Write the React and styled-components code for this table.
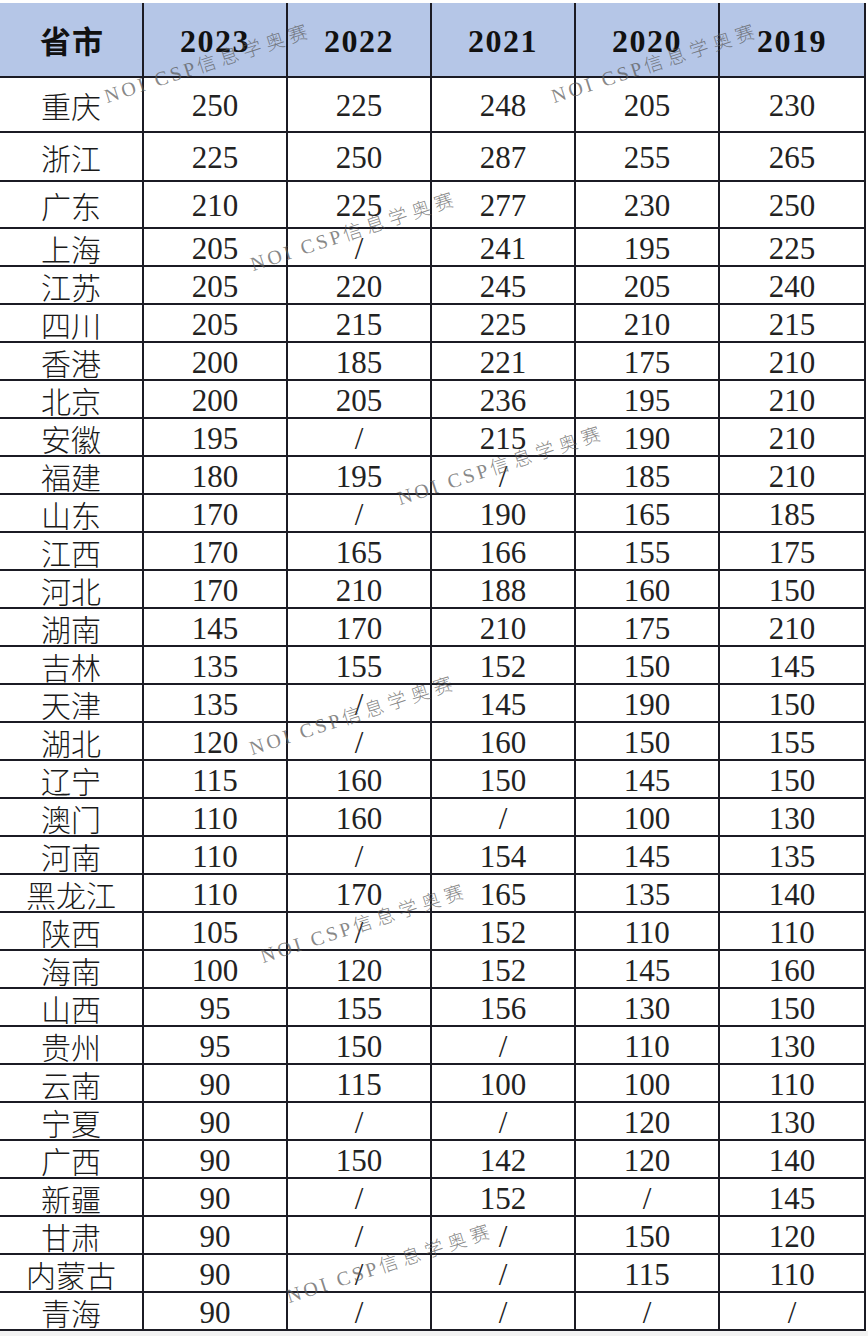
import React from "react";
import styled, { createGlobalStyle } from "styled-components";

const Global = createGlobalStyle`
  html, body { margin: 0; padding: 0; background: #ffffff; }
  body { font-family: "Liberation Serif", "Noto Sans CJK SC", serif; }
`;

const years = ["2023", "2022", "2021", "2020", "2019"];

const rows = [
  ["重庆", "250", "225", "248", "205", "230"],
  ["浙江", "225", "250", "287", "255", "265"],
  ["广东", "210", "225", "277", "230", "250"],
  ["上海", "205", "/", "241", "195", "225"],
  ["江苏", "205", "220", "245", "205", "240"],
  ["四川", "205", "215", "225", "210", "215"],
  ["香港", "200", "185", "221", "175", "210"],
  ["北京", "200", "205", "236", "195", "210"],
  ["安徽", "195", "/", "215", "190", "210"],
  ["福建", "180", "195", "/", "185", "210"],
  ["山东", "170", "/", "190", "165", "185"],
  ["江西", "170", "165", "166", "155", "175"],
  ["河北", "170", "210", "188", "160", "150"],
  ["湖南", "145", "170", "210", "175", "210"],
  ["吉林", "135", "155", "152", "150", "145"],
  ["天津", "135", "/", "145", "190", "150"],
  ["湖北", "120", "/", "160", "150", "155"],
  ["辽宁", "115", "160", "150", "145", "150"],
  ["澳门", "110", "160", "/", "100", "130"],
  ["河南", "110", "/", "154", "145", "135"],
  ["黑龙江", "110", "170", "165", "135", "140"],
  ["陕西", "105", "/", "152", "110", "110"],
  ["海南", "100", "120", "152", "145", "160"],
  ["山西", "95", "155", "156", "130", "150"],
  ["贵州", "95", "150", "/", "110", "130"],
  ["云南", "90", "115", "100", "100", "110"],
  ["宁夏", "90", "/", "/", "120", "130"],
  ["广西", "90", "150", "142", "120", "140"],
  ["新疆", "90", "/", "152", "/", "145"],
  ["甘肃", "90", "/", "/", "150", "120"],
  ["内蒙古", "90", "/", "/", "115", "110"],
  ["青海", "90", "/", "/", "/", "/"],
];

const rowHeights = [55, 49, 47];

const marks = [
  { x: 108, y: 102 },
  { x: 555, y: 102 },
  { x: 254, y: 270 },
  { x: 401, y: 504 },
  { x: 253, y: 754 },
  { x: 264, y: 962 },
  { x: 290, y: 1302 },
];

const Page = styled.div`
  padding-top: 3px;
  padding-bottom: 5px;
  background: linear-gradient(#ffffff 0, #ffffff 1331px, #f2f2f2 1331px);
`;

const Sheet = styled.div`
  position: relative;
  width: 866px;
`;

const Grid = styled.div`
  display: grid;
  grid-template-columns: 144px 144px 144px 144px 144px 146px;
  width: 866px;
`;

const Cell = styled.div`
  box-sizing: border-box;
  height: ${(p) => p.$h}px;
  border-right: 2px solid #1b1b24;
  border-bottom: 2px solid #1b1b24;
  display: flex;
  align-items: center;
  justify-content: center;
  background: ${(p) => (p.$head ? "#b5c6e7" : "#ffffff")};
  color: #141414;
  white-space: nowrap;
`;

const HeadName = styled.span`
  font-family: "Noto Sans CJK SC", sans-serif;
  font-weight: 700;
  font-size: 31px;
  line-height: 1;
  letter-spacing: 1px;
  color: #111;
  padding-left: 2px;
`;

const HeadYear = styled.span`
  font-family: "Liberation Serif", serif;
  font-weight: 700;
  font-size: 32px;
  line-height: 1;
  letter-spacing: 1.5px;
  color: #111;
  padding-top: 2px;
`;

const Province = styled.span`
  font-family: "Noto Sans CJK SC", sans-serif;
  font-weight: 300;
  font-size: 30px;
  line-height: 30px;
  color: #1a1a1a;
  padding-top: 1px;
`;

const Num = styled.span`
  font-family: "Liberation Serif", serif;
  font-size: 31px;
  line-height: 1;
  color: #222;
  padding-top: 2px;
`;

const Mark = styled.span`
  position: absolute;
  left: ${(p) => p.$x}px;
  top: ${(p) => p.$y - 20}px;
  transform-origin: 0% 100%;
  transform: rotate(-18deg);
  font-family: "Liberation Serif", "Noto Sans CJK SC", serif;
  font-size: 20px;
  line-height: 20px;
  letter-spacing: 3px;
  color: rgba(90, 90, 90, 0.72);
  white-space: nowrap;
  pointer-events: none;
`;

const MarkCjk = styled.span`
  font-family: "Noto Sans CJK SC", sans-serif;
  font-weight: 300;
  font-size: 19px;
  letter-spacing: 5px;
`;

export default function App() {
  return (
    <Page>
      <Global />
      <Sheet>
        <Grid>
          <Cell $head $h={75}>
            <HeadName>省市</HeadName>
          </Cell>
          {years.map((y) => (
            <Cell key={y} $head $h={75}>
              <HeadYear>{y}</HeadYear>
            </Cell>
          ))}
          {rows.map((r, i) => {
            const h = rowHeights[i] || 38;
            return (
              <React.Fragment key={r[0]}>
                <Cell $h={h}>
                  <Province>{r[0]}</Province>
                </Cell>
                {r.slice(1).map((v, j) => (
                  <Cell key={j} $h={h}>
                    <Num>{v}</Num>
                  </Cell>
                ))}
              </React.Fragment>
            );
          })}
        </Grid>
        {marks.map((m, i) => (
          <Mark key={i} $x={m.x} $y={m.y}>
            NOI CSP<MarkCjk>信息学奥赛</MarkCjk>
          </Mark>
        ))}
      </Sheet>
    </Page>
  );
}
